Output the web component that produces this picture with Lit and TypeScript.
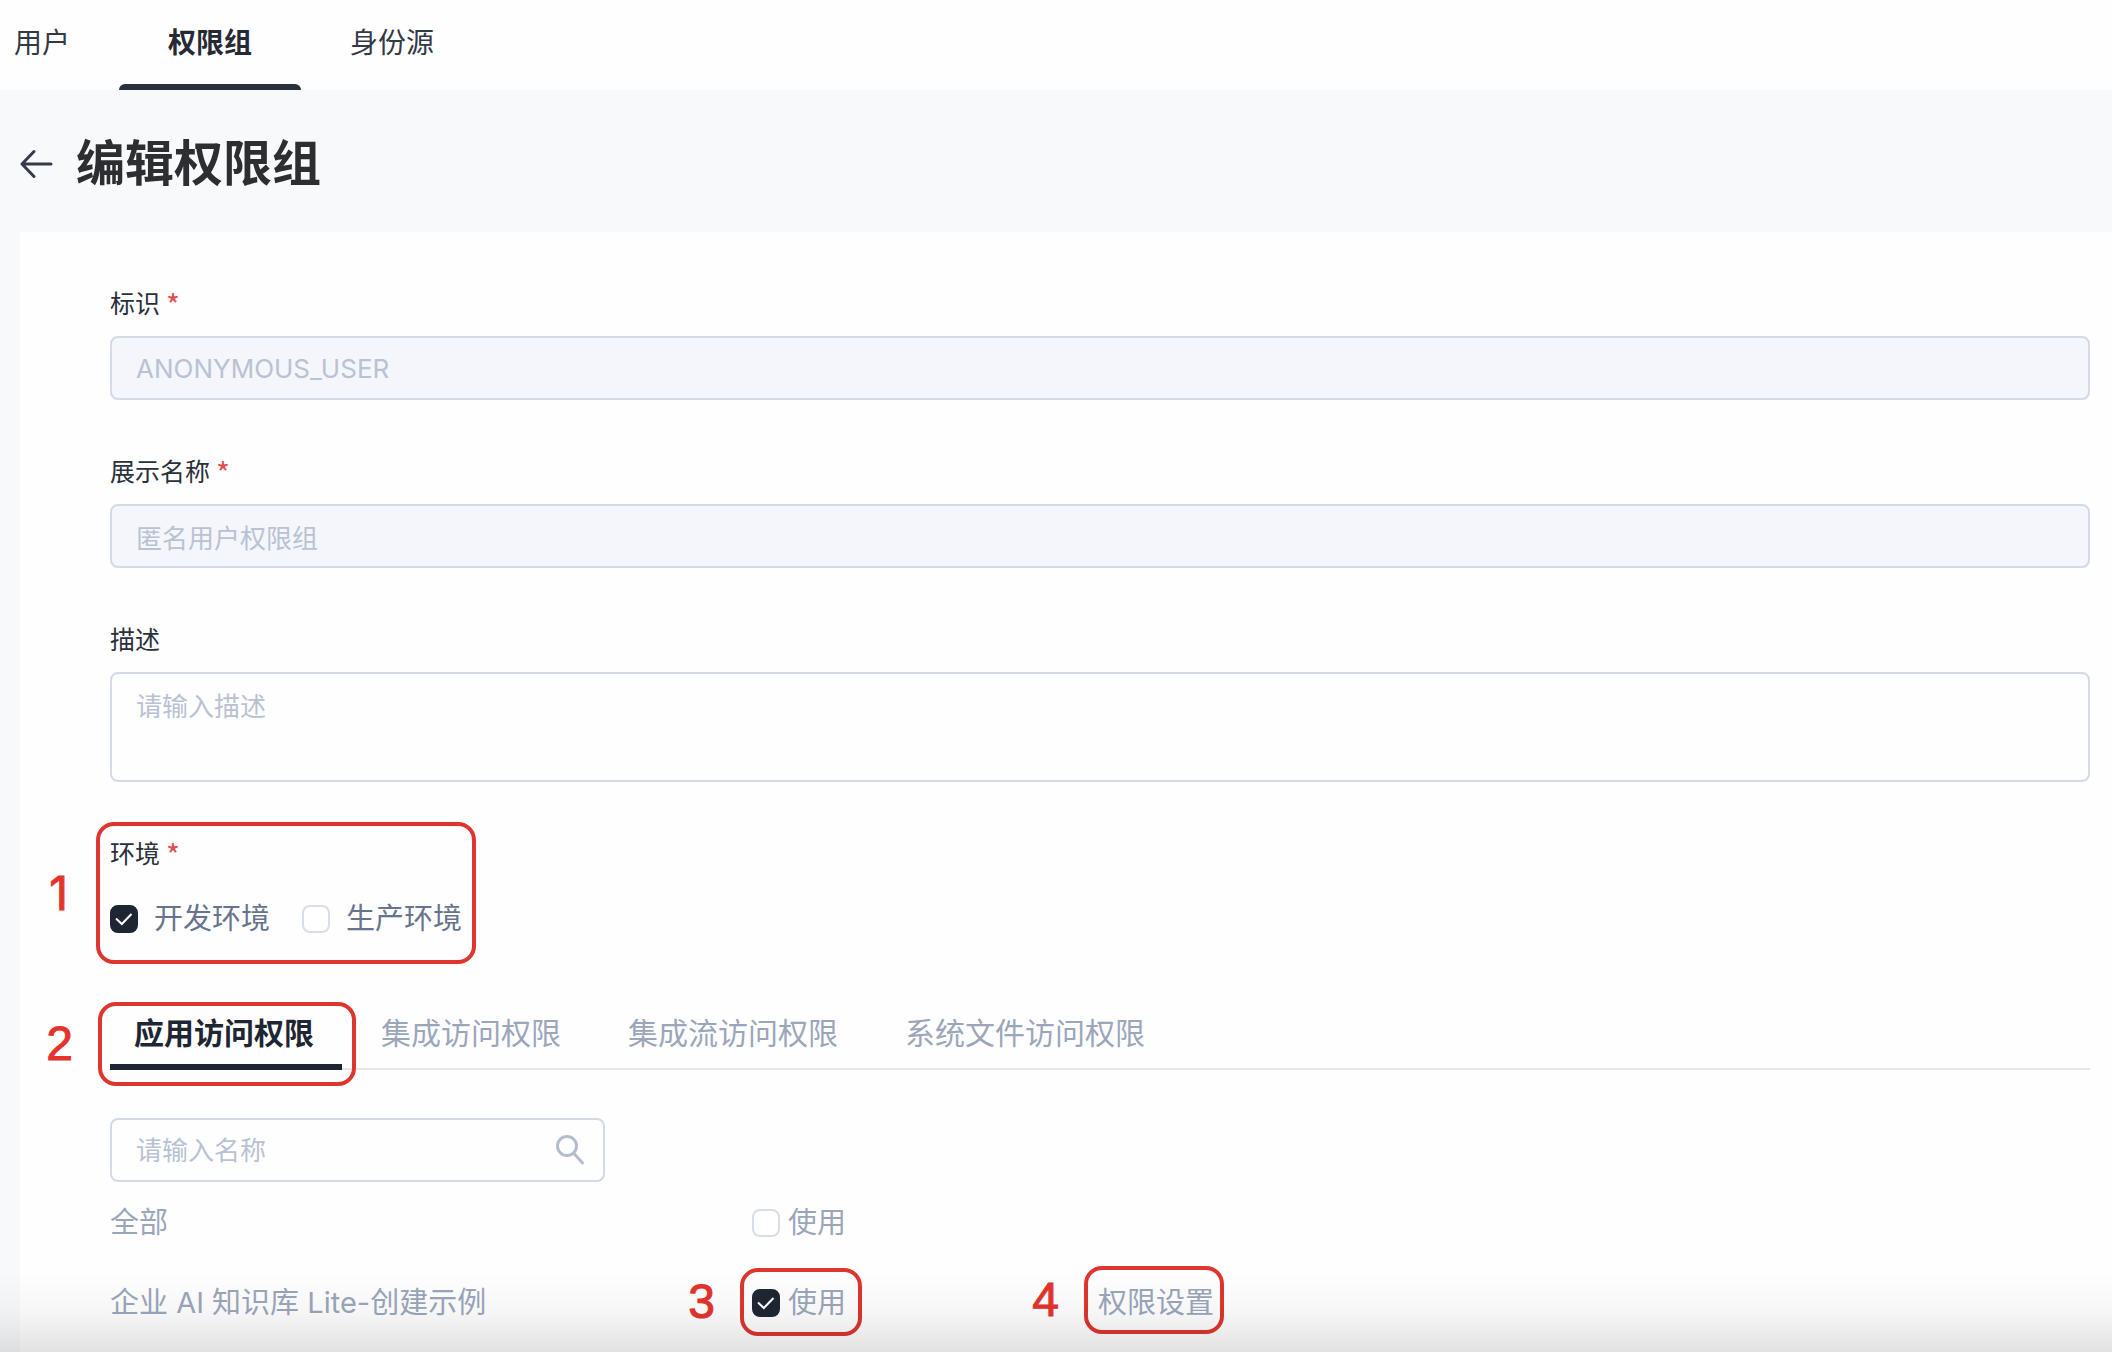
import { LitElement, html, css } from "lit";
import { customElement, property, state } from "lit/decorators.js";
import { classMap } from "lit/directives/class-map.js";

/** Tick box with a text label. */
@customElement("check-item")
class CheckItem extends LitElement {
  @property() label = "";
  @property({ type: Boolean }) checked = false;

  static styles = css`
    :host {
      display: flex;
    }
    .item {
      display: inline-flex;
      align-items: center;
      gap: var(--check-gap, 16px);
      cursor: pointer;
      white-space: nowrap;
    }
    .control {
      display: grid;
      width: 28px;
      height: 28px;
    }
    .box,
    .mark {
      grid-area: 1 / 1;
      width: 28px;
      height: 28px;
    }
    .box {
      appearance: none;
      box-sizing: border-box;
      margin: 0;
      border: 2px solid #d9dde8;
      border-radius: 8px;
      background: #fff;
    }
    .box:checked {
      border-color: #1f2633;
      background: #1f2633;
    }
    .mark {
      display: none;
      pointer-events: none;
    }
    .box:checked + .mark {
      display: block;
    }
  `;

  private onChange(e: Event) {
    this.checked = (e.target as HTMLInputElement).checked;
  }

  render() {
    return html`
      <label class="item">
        <span class="control">
          <input class="box" type="checkbox" .checked=${this.checked} @change=${this.onChange} />
          <svg class="mark" viewBox="0 0 28 28" fill="none" stroke="#fff" stroke-width="2" aria-hidden="true">
            <path d="M6 13.5 L11.8 19 L21.5 9" />
          </svg>
        </span>
        <span>${this.label}</span>
      </label>
    `;
  }
}

/** Numbered red frame drawn around the slotted content. */
@customElement("call-out")
class CallOut extends LitElement {
  @property() number = "";

  static styles = css`
    :host {
      display: block;
      position: relative;
      width: max-content;
    }
    .frame {
      position: absolute;
      inset: var(--frame-inset, -12px);
      border: 4px solid #de352e;
      border-radius: 18px;
      pointer-events: none;
    }
    .number {
      position: absolute;
      top: 50%;
      right: calc(100% + var(--number-gap, 29px));
      transform: translateY(-50%);
      color: #e3332c;
      font-family: "Liberation Sans", sans-serif;
      font-size: 48px;
      line-height: 48px;
      -webkit-text-stroke: 1px #e3332c;
      pointer-events: none;
    }
    .number.sans-foot {
      font-family: Inter, sans-serif;
      font-size: 46px;
    }
  `;

  render() {
    return html`
      <slot></slot>
      <div class="frame">
        <span class=${classMap({ number: true, "sans-foot": this.number === "1" })}>${this.number}</span>
      </div>
    `;
  }
}

const NAV = ["用户", "权限组", "身份源"];
const TABS = ["应用访问权限", "集成访问权限", "集成流访问权限", "系统文件访问权限"];

@customElement("app-root")
class AppRoot extends LitElement {
  @state() private nav = 1;
  @state() private tab = 0;

  static styles = css`
    :host {
      display: flex;
      flex-direction: column;
      position: relative;
      box-sizing: border-box;
      min-height: 100vh;
      overflow: hidden;
      background: #f7f9fb;
      color: #2b303b;
      font-family: Inter, "Noto Sans CJK SC", sans-serif;
      font-size: 29px;
    }
    button,
    input,
    textarea {
      box-sizing: border-box;
      font-family: inherit;
    }
    .nav {
      display: flex;
      height: 90px;
      background: #fefefe;
    }
    .nav-item {
      padding: 0 49px 4px;
      border: 0;
      background: none;
      color: #343945;
      font-size: 28px;
      cursor: pointer;
    }
    .nav-item:first-child {
      padding-left: 14px;
    }
    .nav-item.active {
      display: flex;
      flex-direction: column;
      padding-bottom: 0;
      color: #252a35;
      font-weight: 600;
    }
    .nav-text {
      display: block;
      line-height: 86px;
    }
    .nav-item.active::after {
      content: "";
      align-self: stretch;
      height: 6px;
      margin: -2px -49px 0;
      border-radius: 6px 6px 0 0;
      background: #2a303d;
    }
    .header {
      display: flex;
      align-items: center;
      gap: 22px;
      box-sizing: border-box;
      height: 142px;
      padding: 6px 18px 0;
    }
    .back {
      display: flex;
      padding: 0;
      border: 0;
      background: none;
      cursor: pointer;
    }
    .title {
      margin: 0;
      color: #2c2e31;
      font-size: 49px;
      font-weight: 700;
      line-height: 64px;
    }
    .panel {
      flex: 1;
      margin-left: 20px;
      padding: 54px 22px 8px 90px;
      background: #fefefe;
    }
    .form {
      display: flex;
      flex-direction: column;
      gap: 54px;
    }
    .field {
      display: flex;
      flex-direction: column;
      gap: 14px;
    }
    .label {
      display: flex;
      gap: 6px;
      font-size: 25px;
      line-height: 36px;
    }
    .star {
      color: #e04f50;
      font-family: "Noto Sans CJK SC", sans-serif;
      font-size: 30px;
    }
    .input {
      width: 100%;
      height: 64px;
      padding: 0 24px;
      border: 2px solid #d3d9e5;
      border-radius: 8px;
      outline: none;
      background: #fefefe;
      color: #2b303b;
      font-size: 26px;
    }
    .input:disabled {
      background: #f4f6fb;
      color: #b9c2d3;
    }
    .input::placeholder {
      color: #b9c2d3;
      opacity: 1;
    }
    .area {
      display: block;
      height: 110px;
      padding: 14px 24px;
      line-height: 38px;
      resize: none;
    }
    .env {
      --frame-inset: -14px -14px -24px -14px;
      --number-gap: 32px;
    }
    .checks {
      display: flex;
      gap: 32px;
      margin-top: 26px;
      color: #68748d;
      line-height: 42px;
    }
    .tabs {
      display: flex;
      gap: 15px;
      margin-top: 66px;
      border-bottom: 2px solid #e4e7ee;
    }
    .tab {
      display: block;
      height: 64px;
      margin-bottom: -2px;
      padding: 0 28px 8px 24px;
      border: 0;
      border-bottom: 6px solid transparent;
      background: none;
      color: #9ba6bb;
      font-size: 30px;
      cursor: pointer;
    }
    .tab.active {
      border-bottom-color: #1f2633;
      color: #1f2633;
      font-weight: 600;
    }
    .tab-frame {
      --frame-inset: -4px -14px -18px -12px;
    }
    .search {
      display: flex;
      align-items: center;
      width: 25%;
      height: 64px;
      margin-top: 48px;
      box-sizing: border-box;
      border: 2px solid #d3d9e5;
      border-radius: 8px;
    }
    .search .input {
      flex: 1;
      min-width: 0;
      height: 100%;
      padding: 0 24px;
      border: 0;
      background: none;
    }
    .find {
      display: flex;
      padding: 0;
      margin-right: 16px;
      border: 0;
      background: none;
      cursor: pointer;
    }
    .grid {
      margin-top: 1px;
      border-collapse: collapse;
      color: #9ba6bb;
      --check-gap: 8px;
    }
    .grid td {
      height: 80px;
      padding: 0;
      line-height: 42px;
      white-space: nowrap;
    }
    .name {
      width: 642px;
    }
    .use {
      width: 346px;
    }
    .use-frame {
      --frame-inset: -14px -16px -12px -12px;
    }
    .set-frame {
      --frame-inset: -16px -10px -10px -14px;
    }
    .link {
      display: block;
      color: inherit;
      text-decoration: none;
    }
    .shade {
      position: absolute;
      inset: auto 0 0;
      height: 80px;
      background: linear-gradient(rgba(0, 0, 0, 0), rgba(0, 0, 0, 0.03) 50%, rgba(0, 0, 0, 0.11));
      pointer-events: none;
    }
  `;

  private renderTab(text: string, i: number) {
    const active = this.tab === i;
    const button = html`
      <button
        role="tab"
        aria-selected=${active}
        class=${classMap({ tab: true, active })}
        @click=${() => (this.tab = i)}
      >${text}</button>
    `;
    return i === 0 ? html`<call-out class="tab-frame" number="2">${button}</call-out>` : button;
  }

  render() {
    return html`
      <nav class="nav">
        ${NAV.map(
          (text, i) => html`
            <button
              class=${classMap({ "nav-item": true, active: this.nav === i })}
              @click=${() => (this.nav = i)}
            ><span class="nav-text">${text}</span></button>
          `
        )}
      </nav>

      <header class="header">
        <button class="back" aria-label="返回">
          <svg width="36" height="36" viewBox="0 0 36 36" fill="none" stroke="#343b4d" stroke-width="3">
            <path d="M33 18 H4 M16 5.5 L4 18 L16 30.5" stroke-linecap="round" stroke-linejoin="round" />
          </svg>
        </button>
        <h1 class="title">编辑权限组</h1>
      </header>

      <main class="panel">
        <form class="form" @submit=${(e: Event) => e.preventDefault()}>
          <div class="field">
            <label class="label" for="ident">标识<span class="star">*</span></label>
            <input class="input" id="ident" value="ANONYMOUS_USER" disabled />
          </div>
          <div class="field">
            <label class="label" for="display">展示名称<span class="star">*</span></label>
            <input class="input" id="display" value="匿名用户权限组" disabled />
          </div>
          <div class="field">
            <label class="label" for="desc">描述</label>
            <textarea class="input area" id="desc" placeholder="请输入描述"></textarea>
          </div>
          <call-out class="env" number="1">
            <div role="group" aria-labelledby="env-label">
              <div class="label" id="env-label">环境<span class="star">*</span></div>
              <div class="checks">
                <check-item label="开发环境" checked></check-item>
                <check-item label="生产环境"></check-item>
              </div>
            </div>
          </call-out>
        </form>

        <div class="tabs" role="tablist">${TABS.map((text, i) => this.renderTab(text, i))}</div>

        <div class="search">
          <input class="input" type="text" aria-label="名称" placeholder="请输入名称" />
          <button class="find" aria-label="搜索">
            <svg width="32" height="36" viewBox="0 0 32 36" fill="none" stroke="#b4bdcf" stroke-width="3">
              <circle cx="12" cy="14" r="9.5" />
              <path d="M19 21.5 L27.5 31" stroke-linecap="round" />
            </svg>
          </button>
        </div>

        <table class="grid">
          <tbody>
            <tr>
              <td class="name">全部</td>
              <td class="use"><check-item label="使用"></check-item></td>
              <td></td>
            </tr>
            <tr>
              <td class="name">企业 AI 知识库 Lite-创建示例</td>
              <td class="use">
                <call-out class="use-frame" number="3"><check-item label="使用" checked></check-item></call-out>
              </td>
              <td>
                <call-out class="set-frame" number="4"><a class="link" href="#settings">权限设置</a></call-out>
              </td>
            </tr>
          </tbody>
        </table>
      </main>
      <div class="shade"></div>
    `;
  }
}
